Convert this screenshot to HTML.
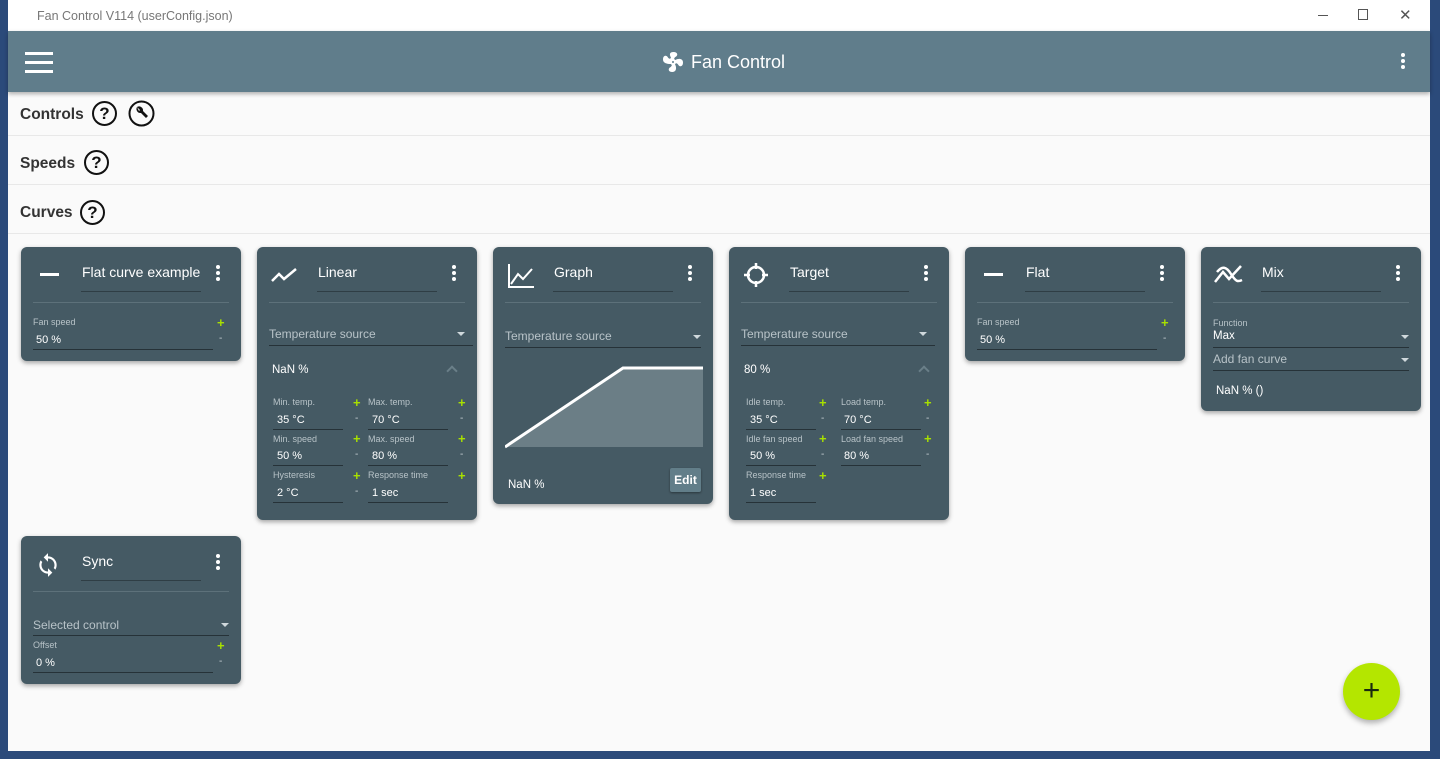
<!DOCTYPE html>
<html><head><meta charset="utf-8"><style>
*{box-sizing:border-box;margin:0;padding:0}
body{width:1440px;height:759px;overflow:hidden;background:#2b4a7a;font-family:"Liberation Sans",sans-serif;position:relative}
.win{position:absolute;left:8px;top:0;width:1422px;height:751px;background:#fafafa}
.title{position:absolute;left:0;top:0;width:100%;height:31px;background:#fff;color:#777;font-size:12.5px}
.hdr{position:absolute;left:0;top:31px;width:100%;height:61px;background:#607d8b;box-shadow:0 2px 4px rgba(0,0,0,.3)}
.sec{position:absolute;left:0;width:100%;height:49px;border-bottom:1px solid #e8e8e8;font-size:15.5px;font-weight:bold;color:#333}
.sec span{position:absolute;left:12px;top:19px}
.q{position:absolute;width:25px;height:25px;border:2px solid #111;border-radius:50%;font-size:17px;font-weight:bold;text-align:center;line-height:21px;color:#111}
.card{position:absolute;width:220px;background:#455a64;border-radius:6px;box-shadow:0 2px 5px rgba(0,0,0,.35);color:#fff}
.ct{position:absolute;left:61px;top:17px;font-size:14px}
.ul{position:absolute;left:60px;top:44px;width:120px;border-top:1px solid #2f3e45}
.dots{position:absolute;left:195px;top:18px;width:4px}
.dots i{display:block;width:4px;height:4px;border-radius:50%;background:#fff;margin-bottom:2px}
.sep{position:absolute;left:12px;right:12px;top:55px;border-top:1px solid #5d717a}
.ico{position:absolute;left:12px;top:14px}
.lbl{position:absolute;font-size:9px;color:#b8c3c8}
.val{position:absolute;font-size:11px;color:#fff}
.line{position:absolute;border-top:1px solid #263238}
.plus{position:absolute;color:#a8e000;font-size:13px;font-weight:bold}
.minus{position:absolute;color:#c8d0d4;font-size:10px}
.sel{position:absolute;font-size:12px;color:#b8c3c8}
.arr{position:absolute;width:0;height:0;border-left:4px solid transparent;border-right:4px solid transparent;border-top:4px solid #cfd8dc}
</style></head><body>
<div class="win">
<div class="title"><span style="position:absolute;left:29px;top:9px">Fan Control V114 (userConfig.json)</span>
<span style="position:absolute;left:1310px;top:15px;width:10px;border-top:1px solid #555"></span>
<span style="position:absolute;left:1350px;top:9px;width:10px;height:11px;border:1px solid #555"></span>
<span style="position:absolute;left:1391px;top:6px;font-size:15px;color:#555">✕</span></div>
<div class="hdr">
<div style="position:absolute;left:17px;top:21px;width:28px"><div style="height:3px;background:#fff;margin-bottom:6px"></div><div style="height:3px;background:#fff;margin-bottom:6px"></div><div style="height:3px;background:#fff"></div></div>
<svg style="position:absolute;left:653px;top:19px" width="24" height="24" viewBox="0 0 24 24"><path fill="#fff" d="M12 11a1 1 0 1 0 0 2 1 1 0 0 0 0-2m.5-9C17 2 17.1 5.6 14.7 6.8c-1 .5-1.4 1.4-1.6 2.3.5.2.9.5 1.2.9 3.7-2 7.7-1.2 7.7 2.5 0 4.5-3.6 4.6-4.8 2.2-.5-1-1.4-1.4-2.300-1.6-.2.5-.5.9-.9 1.2 2 3.7 1.2 7.7-2.5 7.7-4.5 0-4.6-3.6-2.2-4.8 1-.5 1.4-1.4 1.6-2.3-.5-.2-.9-.5-1.2-.9C6 14 2 13.2 2 9.5 2 5 5.6 4.9 6.8 7.3c.5 1 1.4 1.4 2.3 1.6.2-.5.5-.9.9-1.2C8 4 8.8 2 12.5 2z"/></svg>
<span style="position:absolute;left:683px;top:21px;color:#fff;font-size:18px">Fan Control</span>
<div style="position:absolute;left:1393px;top:22px"><div class="dots" style="left:0;top:0"><i></i><i></i><i></i></div></div>
</div>
<div class="sec" style="top:92px;height:44px"><span style="top:14px">Controls</span><div class="q" style="left:84px;top:9px">?</div>
<svg style="position:absolute;left:120px;top:8px" width="27" height="27" viewBox="0 0 27 27"><circle cx="13.5" cy="13.5" r="12" fill="none" stroke="#111" stroke-width="2"/><path d="M9 7a4 4 0 0 0 4 6l5 5 2-2-5-5a4 4 0 0 0-6-4l3 3-1 1z" fill="#111"/></svg></div>
<div class="sec" style="top:136px"><span>Speeds</span><div class="q" style="left:76px;top:14px">?</div></div>
<div class="sec" style="top:185px"><span>Curves</span><div class="q" style="left:72px;top:15px">?</div></div>

<div class="card" style="left:13px;top:247px;height:114px">
<div class="ico" style="left:19px;top:26px;width:19px;height:3px;background:#fff"></div>
<div class="ct">Flat curve example</div><div class="ul"></div><div class="dots"><i></i><i></i><i></i></div><div class="sep"></div>
<div class="lbl" style="left:12px;top:70px">Fan speed</div><div class="plus" style="left:196px;top:68px">+</div>
<div class="val" style="left:15px;top:87px">50 %</div><div class="minus" style="left:198px;top:86px">-</div>
<div class="line" style="left:12px;top:102px;width:180px"></div>
</div>

<div class="card" style="left:249px;top:247px;height:273px">
<svg class="ico" style="left:14px;top:20px" width="28" height="16"><path d="M1 14l7-7 5 5 12-10" fill="none" stroke="#fff" stroke-width="2.5"/></svg>
<div class="ct">Linear</div><div class="ul"></div><div class="dots"><i></i><i></i><i></i></div><div class="sep"></div>
<div class="sel" style="left:12px;top:80px">Temperature source</div><div class="arr" style="left:200px;top:85px"></div>
<div class="line" style="left:12px;top:98px;width:204px"></div>
<div class="val" style="left:15px;top:117px;font-size:11.5px">NaN %</div>
<div style="position:absolute;left:191px;top:120px;width:8px;height:8px;border-left:2px solid #6a7f88;border-top:2px solid #6a7f88;transform:rotate(45deg)"></div>
<div class="lbl" style="left:16px;top:150px">Min. temp.</div><div class="plus" style="left:96px;top:148px">+</div><div class="val" style="left:20px;top:167px">35 °C</div><div class="minus" style="left:98px;top:166px">-</div><div class="line" style="left:16px;top:182px;width:70px"></div>
<div class="lbl" style="left:111px;top:150px">Max. temp.</div><div class="plus" style="left:201px;top:148px">+</div><div class="val" style="left:115px;top:167px">70 °C</div><div class="minus" style="left:203px;top:166px">-</div><div class="line" style="left:111px;top:182px;width:80px"></div>
<div class="lbl" style="left:16px;top:187px">Min. speed</div><div class="plus" style="left:96px;top:184px">+</div><div class="val" style="left:20px;top:203px">50 %</div><div class="minus" style="left:98px;top:202px">-</div><div class="line" style="left:16px;top:218px;width:70px"></div>
<div class="lbl" style="left:111px;top:187px">Max. speed</div><div class="plus" style="left:201px;top:184px">+</div><div class="val" style="left:115px;top:203px">80 %</div><div class="minus" style="left:203px;top:202px">-</div><div class="line" style="left:111px;top:218px;width:80px"></div>
<div class="lbl" style="left:16px;top:223px">Hysteresis</div><div class="plus" style="left:96px;top:221px">+</div><div class="val" style="left:20px;top:240px">2 °C</div><div class="minus" style="left:98px;top:239px">-</div><div class="line" style="left:16px;top:255px;width:70px"></div>
<div class="lbl" style="left:111px;top:223px">Response time</div><div class="plus" style="left:201px;top:221px">+</div><div class="val" style="left:115px;top:240px">1 sec</div><div class="line" style="left:111px;top:255px;width:80px"></div>
</div>

<div class="card" style="left:485px;top:247px;height:257px">
<svg class="ico" style="left:14px;top:16px" width="28" height="26"><path d="M2 1v23h25M4 21l7-10 5 5 9-10" fill="none" stroke="#fff" stroke-width="2"/></svg>
<div class="ct">Graph</div><div class="ul"></div><div class="dots"><i></i><i></i><i></i></div><div class="sep"></div>
<div class="sel" style="left:12px;top:82px">Temperature source</div><div class="arr" style="left:200px;top:88px"></div>
<div class="line" style="left:12px;top:100px;width:196px"></div>
<svg style="position:absolute;left:12px;top:118px" width="198" height="84"><path d="M0 82L118 3H198V82Z" fill="#6b7e86"/><path d="M0 82L118 3H198" fill="none" stroke="#fff" stroke-width="3"/></svg>
<div class="val" style="left:15px;top:232px;font-size:11.5px">NaN %</div>
<div style="position:absolute;left:177px;top:221px;width:31px;height:24px;background:#627e89;border-radius:2px;font-size:12px;font-weight:bold;text-align:center;line-height:24px;box-shadow:0 1px 2px rgba(0,0,0,.4)">Edit</div>
</div>

<div class="card" style="left:721px;top:247px;height:273px">
<svg class="ico" style="left:14px;top:15px" width="26" height="26"><circle cx="13" cy="13" r="8" fill="none" stroke="#fff" stroke-width="2.5"/><path d="M13 1v6M13 19v6M1 13h6M19 13h6" stroke="#fff" stroke-width="2.5"/></svg>
<div class="ct">Target</div><div class="ul"></div><div class="dots"><i></i><i></i><i></i></div><div class="sep"></div>
<div class="sel" style="left:12px;top:80px">Temperature source</div><div class="arr" style="left:190px;top:85px"></div>
<div class="line" style="left:12px;top:98px;width:194px"></div>
<div class="val" style="left:15px;top:117px;font-size:11.5px">80 %</div>
<div style="position:absolute;left:191px;top:120px;width:8px;height:8px;border-left:2px solid #6a7f88;border-top:2px solid #6a7f88;transform:rotate(45deg)"></div>
<div class="lbl" style="left:17px;top:150px">Idle temp.</div><div class="plus" style="left:90px;top:148px">+</div><div class="val" style="left:21px;top:167px">35 °C</div><div class="minus" style="left:92px;top:166px">-</div><div class="line" style="left:17px;top:182px;width:70px"></div>
<div class="lbl" style="left:112px;top:150px">Load temp.</div><div class="plus" style="left:195px;top:148px">+</div><div class="val" style="left:115px;top:167px">70 °C</div><div class="minus" style="left:197px;top:166px">-</div><div class="line" style="left:112px;top:182px;width:80px"></div>
<div class="lbl" style="left:17px;top:187px">Idle fan speed</div><div class="plus" style="left:90px;top:184px">+</div><div class="val" style="left:21px;top:203px">50 %</div><div class="minus" style="left:92px;top:202px">-</div><div class="line" style="left:17px;top:218px;width:70px"></div>
<div class="lbl" style="left:112px;top:187px">Load fan speed</div><div class="plus" style="left:195px;top:184px">+</div><div class="val" style="left:115px;top:203px">80 %</div><div class="minus" style="left:197px;top:202px">-</div><div class="line" style="left:112px;top:218px;width:80px"></div>
<div class="lbl" style="left:17px;top:223px">Response time</div><div class="plus" style="left:90px;top:221px">+</div><div class="val" style="left:21px;top:240px">1 sec</div><div class="line" style="left:17px;top:255px;width:70px"></div>
</div>

<div class="card" style="left:957px;top:247px;height:114px">
<div class="ico" style="left:19px;top:26px;width:19px;height:3px;background:#fff"></div>
<div class="ct">Flat</div><div class="ul"></div><div class="dots"><i></i><i></i><i></i></div><div class="sep"></div>
<div class="lbl" style="left:12px;top:70px">Fan speed</div><div class="plus" style="left:196px;top:68px">+</div>
<div class="val" style="left:15px;top:87px">50 %</div><div class="minus" style="left:198px;top:86px">-</div>
<div class="line" style="left:12px;top:102px;width:180px"></div>
</div>

<div class="card" style="left:1193px;top:247px;height:164px">
<svg class="ico" style="left:13px;top:17px" width="30" height="20"><path d="M1 18l8-10 6 7 12-13M3 8c5-6 9-6 14 2s7 8 11 6" fill="none" stroke="#fff" stroke-width="2.5"/></svg>
<div class="ct">Mix</div><div class="ul"></div><div class="dots"><i></i><i></i><i></i></div><div class="sep"></div>
<div class="lbl" style="left:12px;top:71px">Function</div>
<div class="val" style="left:12px;top:83px;font-size:11.5px">Max</div><div class="arr" style="left:200px;top:88px"></div>
<div class="line" style="left:12px;top:100px;width:196px"></div>
<div class="sel" style="left:12px;top:105px">Add fan curve</div><div class="arr" style="left:200px;top:111px"></div>
<div class="line" style="left:12px;top:123px;width:196px"></div>
<div class="val" style="left:15px;top:138px;font-size:11.5px">NaN % ()</div>
</div>

<div class="card" style="left:13px;top:536px;height:148px">
<svg class="ico" style="left:14px;top:15px" width="26" height="28" viewBox="0 0 24 24"><path fill="#fff" d="M12 4V1L8 5l4 4V6c3.3 0 6 2.7 6 6 0 1-.25 2-.7 2.8l1.46 1.46C19.54 15.03 20 13.57 20 12c0-4.420-3.58-8-8-8zm0 14c-3.3 0-6-2.7-6-6 0-1 .25-2 .7-2.8L5.24 7.74C4.46 8.97 4 10.43 4 12c0 4.42 3.58 8 8 8v3l4-4-4-4v3z"/></svg>
<div class="ct">Sync</div><div class="ul"></div><div class="dots"><i></i><i></i><i></i></div><div class="sep"></div>
<div class="sel" style="left:12px;top:82px">Selected control</div><div class="arr" style="left:200px;top:87px"></div>
<div class="line" style="left:12px;top:99px;width:196px"></div>
<div class="lbl" style="left:12px;top:104px">Offset</div><div class="plus" style="left:196px;top:102px">+</div>
<div class="val" style="left:15px;top:121px">0 %</div><div class="minus" style="left:198px;top:120px">-</div>
<div class="line" style="left:12px;top:136px;width:180px"></div>
</div>

<div style="position:absolute;left:1335px;top:663px;width:57px;height:57px;border-radius:50%;background:#b4e600;box-shadow:0 3px 6px rgba(0,0,0,.3);text-align:center;line-height:55px;font-size:30px;color:#1a2a10">+</div>
</div>
</body></html>
